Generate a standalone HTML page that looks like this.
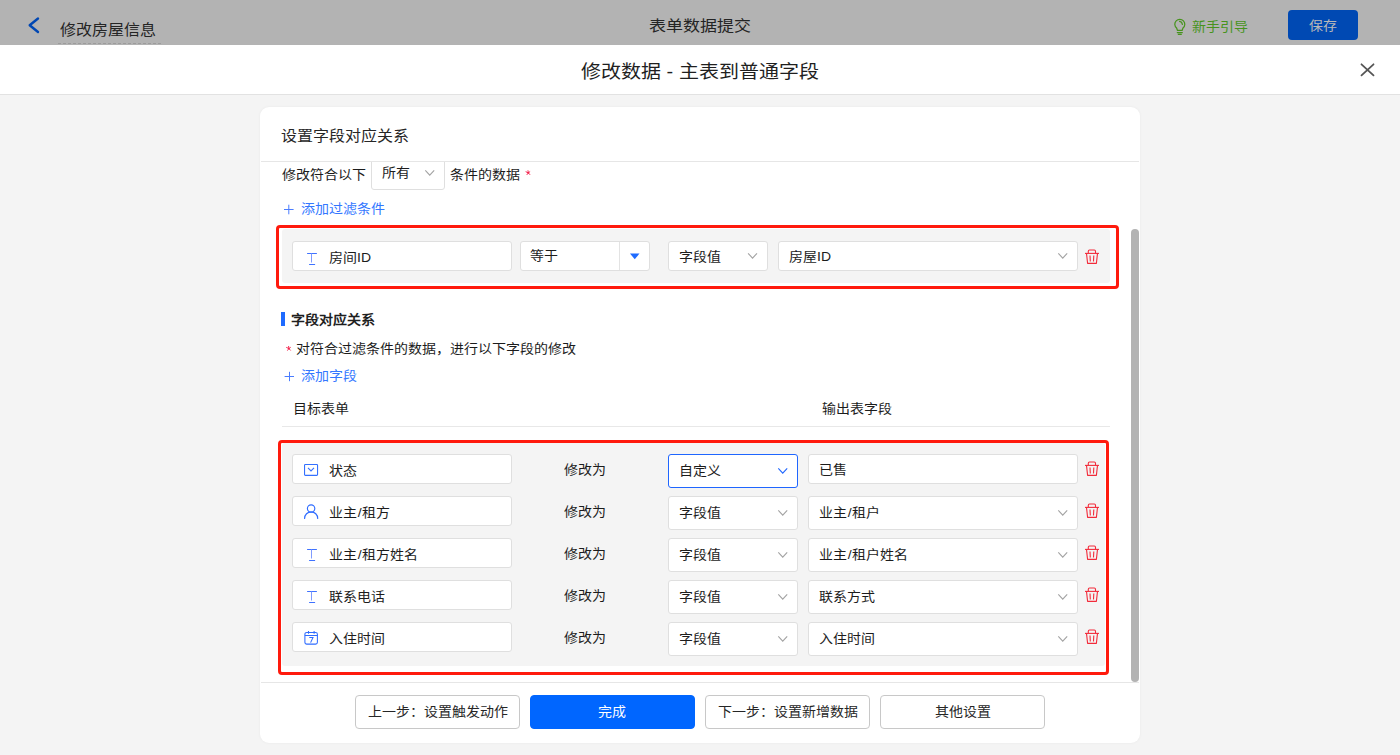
<!DOCTYPE html>
<html lang="zh-CN"><head><meta charset="utf-8">
<style>
*{box-sizing:border-box;margin:0;padding:0}
html,body{width:1400px;height:755px;overflow:hidden;background:#f4f4f4;font-family:"Liberation Sans",sans-serif;color:#333}
.a{position:absolute}
.t{position:absolute;white-space:nowrap;line-height:1;transform:scaleY(0.9);transform-origin:0 90%}
.inp{position:absolute;background:#fff;border:1px solid #dfdfdf;border-radius:3px}
.red{position:absolute;border:3px solid #ff1a0d;border-radius:4px}
.btn{position:absolute;top:695px;height:34px;width:165px;border:1px solid #c8c8c8;border-radius:4px;background:#fff}
svg{position:absolute;overflow:visible}
</style></head><body>
<div class="a" style="left:0;top:0;width:1400px;height:45px;background:#b3b3b3"></div>
<svg style="left:0;top:0" width="1" height="1"><polyline points="38,18.5 29.7,25.3 38,32" fill="none" stroke="#0047b3" stroke-width="2.4" stroke-linecap="round" stroke-linejoin="round"/></svg>
<div class="t" style="left:60px;top:21.76px;font-size:16px;color:#242424;">修改房屋信息</div>
<div class="a" style="left:58px;top:43px;width:104px;height:1px;background:repeating-linear-gradient(90deg,#9c9c9c 0 3px,transparent 3px 5px)"></div>
<div class="t" style="left:649px;top:16.97px;font-size:17px;color:#242424;">表单数据提交</div>
<svg style="left:0;top:0" width="1" height="1"><g fill="none" stroke="#47931d" stroke-width="1.25" stroke-linecap="round" stroke-linejoin="round">
<path d="M1176.6,28.1 A5,5 0 1 1 1183,28.1 L1182.1,30.4 H1177.5 Z"/>
<path d="M1177.3,32.5 H1182.3 M1178.3,34.3 H1181.3"/>
<path d="M1179.6,21.4 A3.4,3.4 0 0 1 1182.4,24.3"/></g></svg>
<div class="t" style="left:1192px;top:19.49px;font-size:14px;color:#47931d;">新手引导</div>
<div class="a" style="left:1288px;top:10px;width:70px;height:30px;background:#0049b3;border-radius:4px"></div>
<div class="t" style="left:1309px;top:18.29px;font-size:14px;color:#b8b8b8;">保存</div>
<div class="a" style="left:0;top:45px;width:1400px;height:50px;background:#fff;border-bottom:1px solid #e2e2e2"></div>
<div class="t" style="left:581px;top:60.85px;font-size:20px;color:#1f1f1f;">修改数据 - 主表到普通字段</div>
<svg style="left:0;top:0" width="1" height="1"><path d="M1361.5,64.3 L1373.5,75.3 M1373.5,64.3 L1361.5,75.3" stroke="#555" stroke-width="1.8" stroke-linecap="round"/></svg>
<div class="a" style="left:260px;top:107px;width:880px;height:636px;background:#fff;border-radius:9px;box-shadow:0 0 3px rgba(0,0,0,0.05)"></div>
<div class="t" style="left:281px;top:128.16px;font-size:16px;color:#262626;">设置字段对应关系</div>
<div class="a" style="left:261px;top:161px;width:878px;height:1px;background:#e6e6e6"></div>
<div class="a" style="left:261px;top:682px;width:878px;height:1px;background:#e6e6e6"></div>
<div class="a" style="left:0;top:0;width:1400px;height:755px;clip-path:inset(162px 0 73px 0)">
<div class="t" style="left:282px;top:167.49px;font-size:14px;color:#1c1c1c;">修改符合以下</div>
<div class="inp" style="left:371px;top:157px;width:74px;height:33px"></div>
<div class="t" style="left:382px;top:165.29px;font-size:14px;color:#1c1c1c;">所有</div>
<svg style="left:0;top:0" width="1" height="1"><polyline points="425.3,170.3 429.75,175.1 434.2,170.3" fill="none" stroke="#a3a3a3" stroke-width="1.1"/></svg>
<div class="t" style="left:450px;top:167.49px;font-size:14px;color:#1c1c1c;">条件的数据</div>
<svg style="left:0;top:0" width="1" height="1"><path d="M528.30,172.90 L528.00,170.70 M528.30,172.90 L526.00,171.80 M528.30,172.90 L529.80,171.80 M528.30,172.90 L527.00,174.60 M528.30,172.90 L529.80,174.50" stroke="#f2204a" stroke-width="0.95" stroke-linecap="round" fill="none"/></svg>
<svg style="left:0;top:0" width="1" height="1"><path d="M284,209.5 H293.6 M288.8,204.7 V214.3" stroke="#4a7dff" stroke-width="1"/></svg>
<div class="t" style="left:301px;top:201.49px;font-size:14px;color:#3377ff;">添加过滤条件</div>
<div class="red" style="left:276px;top:225px;width:843px;height:64px"></div>
<div class="a" style="left:282px;top:229px;width:828px;height:54px;background:#f4f4f4;border-radius:3px"></div>
<div class="inp" style="left:292px;top:241px;width:220px;height:30px"></div>
<svg style="left:306px;top:252px" width="12" height="14" viewBox="0 0 12 14"><g stroke="#3f72ff" stroke-width="1" fill="none"><path d="M1.1,1.5 H10.9 M3.1,12.5 H9.1"/><path d="M5.5,1.5 V10.5" stroke="#7f9bff"/></g></svg>
<div class="t" style="left:329px;top:250.49px;font-size:14px;color:#1c1c1c;">房间ID</div>
<div class="inp" style="left:520px;top:241px;width:130px;height:30px"></div>
<div class="a" style="left:619px;top:242px;width:1px;height:28px;background:#e3e3e3"></div>
<svg style="left:0;top:0" width="1" height="1"><path d="M630,253.6 H639.5 L634.75,259.2 Z" fill="#1f6bff"/></svg>
<div class="t" style="left:530px;top:248.49px;font-size:14px;color:#1c1c1c;">等于</div>
<div class="inp" style="left:668px;top:241px;width:100px;height:30px"></div>
<div class="t" style="left:679px;top:248.59px;font-size:14px;color:#1c1c1c;">字段值</div>
<svg style="left:0;top:0" width="1" height="1"><polyline points="748.0999999999999,253.3 752.55,258.1 757.0,253.3" fill="none" stroke="#a3a3a3" stroke-width="1.1"/></svg>
<div class="inp" style="left:778px;top:241px;width:300px;height:30px"></div>
<div class="t" style="left:789px;top:248.89px;font-size:14px;color:#1c1c1c;">房屋ID</div>
<svg style="left:0;top:0" width="1" height="1"><polyline points="1058.3,253.3 1062.75,258.1 1067.2,253.3" fill="none" stroke="#a3a3a3" stroke-width="1.1"/></svg>
<svg style="left:1085px;top:249px" width="14" height="15" viewBox="0 0 14 15"><g fill="none" stroke="#f22b3a" stroke-width="1.1" stroke-linejoin="round">
<path d="M3.3,4 V2.2 A1.2,1.2 0 0 1 4.5,1 H9.3 A1.2,1.2 0 0 1 10.5,2.2 V4"/><path d="M0,4.4 H14"/><path d="M1.5,4.4 L2.6,14.4 H11.4 L12.5,4.4"/><path d="M5,6.5 L5.3,12.5 M8.8,6.5 L8.5,12.5"/></g></svg>
<div class="a" style="left:281px;top:312px;width:4px;height:14px;background:#1f6bff"></div>
<div class="t" style="left:291px;top:311.74px;font-size:14px;color:#1f1f1f;font-weight:bold">字段对应关系</div>
<svg style="left:0;top:0" width="1" height="1"><path d="M288.90,348.60 L288.60,346.40 M288.90,348.60 L286.60,347.50 M288.90,348.60 L290.40,347.50 M288.90,348.60 L287.60,350.30 M288.90,348.60 L290.40,350.20" stroke="#f2204a" stroke-width="0.95" stroke-linecap="round" fill="none"/></svg>
<div class="t" style="left:296px;top:341.49px;font-size:14px;color:#1c1c1c;">对符合过滤条件的数据，进行以下字段的修改</div>
<svg style="left:0;top:0" width="1" height="1"><path d="M284.6,376.5 H294 M289.5,371.8 V381.2" stroke="#4a7dff" stroke-width="1"/></svg>
<div class="t" style="left:301px;top:368.24px;font-size:14px;color:#3377ff;">添加字段</div>
<div class="t" style="left:293px;top:401.24px;font-size:14px;color:#1c1c1c;">目标表单</div>
<div class="t" style="left:822px;top:401.49px;font-size:14px;color:#1c1c1c;">输出表字段</div>
<div class="a" style="left:282px;top:426px;width:828px;height:1px;background:#e8e8e8"></div>
<div class="red" style="left:278px;top:440px;width:831px;height:235px"></div>
<div class="a" style="left:282px;top:443px;width:823px;height:223px;background:#f4f4f4;border-radius:3px"></div>
<div class="inp" style="left:292px;top:454px;width:220px;height:30px"></div>
<svg style="left:304px;top:464px" width="14" height="12" viewBox="0 0 14 12"><g fill="none" stroke="#3370ff" stroke-width="1.1"><rect x="0.55" y="0.55" width="13" height="10.8" rx="0.8"/><polyline points="4,3.9 7,6.9 10,3.9"/></g></svg>
<div class="t" style="left:329px;top:463.49px;font-size:14px;color:#1c1c1c;">状态</div>
<div class="t" style="left:564px;top:461.99px;font-size:14px;color:#1c1c1c;">修改为</div>
<div class="inp" style="left:668px;top:454px;width:130px;height:34px;border-color:#1f66ff"></div>
<svg style="left:0;top:0" width="1" height="1"><polyline points="778.3,468.3 782.75,473.1 787.2,468.3" fill="none" stroke="#1f66ff" stroke-width="1.1"/></svg>
<div class="t" style="left:679px;top:463.49px;font-size:14px;color:#1c1c1c;">自定义</div>
<div class="inp" style="left:808px;top:454px;width:270px;height:30px"></div>
<div class="t" style="left:819px;top:461.79px;font-size:14px;color:#1c1c1c;">已售</div>
<svg style="left:1085px;top:461px" width="14" height="15" viewBox="0 0 14 15"><g fill="none" stroke="#f22b3a" stroke-width="1.1" stroke-linejoin="round">
<path d="M3.3,4 V2.2 A1.2,1.2 0 0 1 4.5,1 H9.3 A1.2,1.2 0 0 1 10.5,2.2 V4"/><path d="M0,4.4 H14"/><path d="M1.5,4.4 L2.6,14.4 H11.4 L12.5,4.4"/><path d="M5,6.5 L5.3,12.5 M8.8,6.5 L8.5,12.5"/></g></svg>
<div class="inp" style="left:292px;top:496px;width:220px;height:30px"></div>
<svg style="left:303px;top:504px" width="16" height="16" viewBox="0 0 16 16"><g fill="none" stroke="#2f6cff" stroke-width="1.15" stroke-linecap="round"><circle cx="8.1" cy="4.5" r="3.7"/><path d="M1.6,14.4 A6.55,6.55 0 0 1 14.7,14.4"/></g></svg>
<div class="t" style="left:329px;top:505.49px;font-size:14px;color:#1c1c1c;">业主<span style="padding:0 0.8px">/</span>租方</div>
<div class="t" style="left:564px;top:503.99px;font-size:14px;color:#1c1c1c;">修改为</div>
<div class="inp" style="left:668px;top:496px;width:130px;height:34px"></div>
<svg style="left:0;top:0" width="1" height="1"><polyline points="778.3,510.3 782.75,515.1 787.2,510.3" fill="none" stroke="#a3a3a3" stroke-width="1.1"/></svg>
<div class="t" style="left:679px;top:505.49px;font-size:14px;color:#1c1c1c;">字段值</div>
<div class="inp" style="left:808px;top:496px;width:270px;height:34px"></div>
<svg style="left:0;top:0" width="1" height="1"><polyline points="1058.3,510.3 1062.75,515.1 1067.2,510.3" fill="none" stroke="#a3a3a3" stroke-width="1.1"/></svg>
<div class="t" style="left:819px;top:505.49px;font-size:14px;color:#1c1c1c;">业主<span style="padding:0 0.8px">/</span>租户</div>
<svg style="left:1085px;top:503px" width="14" height="15" viewBox="0 0 14 15"><g fill="none" stroke="#f22b3a" stroke-width="1.1" stroke-linejoin="round">
<path d="M3.3,4 V2.2 A1.2,1.2 0 0 1 4.5,1 H9.3 A1.2,1.2 0 0 1 10.5,2.2 V4"/><path d="M0,4.4 H14"/><path d="M1.5,4.4 L2.6,14.4 H11.4 L12.5,4.4"/><path d="M5,6.5 L5.3,12.5 M8.8,6.5 L8.5,12.5"/></g></svg>
<div class="inp" style="left:292px;top:538px;width:220px;height:30px"></div>
<svg style="left:306px;top:548px" width="12" height="14" viewBox="0 0 12 14"><g stroke="#3f72ff" stroke-width="1" fill="none"><path d="M1.1,1.5 H10.9 M3.1,12.5 H9.1"/><path d="M5.5,1.5 V10.5" stroke="#7f9bff"/></g></svg>
<div class="t" style="left:329px;top:547.49px;font-size:14px;color:#1c1c1c;">业主<span style="padding:0 0.8px">/</span>租方姓名</div>
<div class="t" style="left:564px;top:545.99px;font-size:14px;color:#1c1c1c;">修改为</div>
<div class="inp" style="left:668px;top:538px;width:130px;height:34px"></div>
<svg style="left:0;top:0" width="1" height="1"><polyline points="778.3,552.3 782.75,557.1 787.2,552.3" fill="none" stroke="#a3a3a3" stroke-width="1.1"/></svg>
<div class="t" style="left:679px;top:547.49px;font-size:14px;color:#1c1c1c;">字段值</div>
<div class="inp" style="left:808px;top:538px;width:270px;height:34px"></div>
<svg style="left:0;top:0" width="1" height="1"><polyline points="1058.3,552.3 1062.75,557.1 1067.2,552.3" fill="none" stroke="#a3a3a3" stroke-width="1.1"/></svg>
<div class="t" style="left:819px;top:547.49px;font-size:14px;color:#1c1c1c;">业主<span style="padding:0 0.8px">/</span>租户姓名</div>
<svg style="left:1085px;top:545px" width="14" height="15" viewBox="0 0 14 15"><g fill="none" stroke="#f22b3a" stroke-width="1.1" stroke-linejoin="round">
<path d="M3.3,4 V2.2 A1.2,1.2 0 0 1 4.5,1 H9.3 A1.2,1.2 0 0 1 10.5,2.2 V4"/><path d="M0,4.4 H14"/><path d="M1.5,4.4 L2.6,14.4 H11.4 L12.5,4.4"/><path d="M5,6.5 L5.3,12.5 M8.8,6.5 L8.5,12.5"/></g></svg>
<div class="inp" style="left:292px;top:580px;width:220px;height:30px"></div>
<svg style="left:306px;top:590px" width="12" height="14" viewBox="0 0 12 14"><g stroke="#3f72ff" stroke-width="1" fill="none"><path d="M1.1,1.5 H10.9 M3.1,12.5 H9.1"/><path d="M5.5,1.5 V10.5" stroke="#7f9bff"/></g></svg>
<div class="t" style="left:329px;top:589.49px;font-size:14px;color:#1c1c1c;">联系电话</div>
<div class="t" style="left:564px;top:587.99px;font-size:14px;color:#1c1c1c;">修改为</div>
<div class="inp" style="left:668px;top:580px;width:130px;height:34px"></div>
<svg style="left:0;top:0" width="1" height="1"><polyline points="778.3,594.3 782.75,599.1 787.2,594.3" fill="none" stroke="#a3a3a3" stroke-width="1.1"/></svg>
<div class="t" style="left:679px;top:589.49px;font-size:14px;color:#1c1c1c;">字段值</div>
<div class="inp" style="left:808px;top:580px;width:270px;height:34px"></div>
<svg style="left:0;top:0" width="1" height="1"><polyline points="1058.3,594.3 1062.75,599.1 1067.2,594.3" fill="none" stroke="#a3a3a3" stroke-width="1.1"/></svg>
<div class="t" style="left:819px;top:589.49px;font-size:14px;color:#1c1c1c;">联系方式</div>
<svg style="left:1085px;top:587px" width="14" height="15" viewBox="0 0 14 15"><g fill="none" stroke="#f22b3a" stroke-width="1.1" stroke-linejoin="round">
<path d="M3.3,4 V2.2 A1.2,1.2 0 0 1 4.5,1 H9.3 A1.2,1.2 0 0 1 10.5,2.2 V4"/><path d="M0,4.4 H14"/><path d="M1.5,4.4 L2.6,14.4 H11.4 L12.5,4.4"/><path d="M5,6.5 L5.3,12.5 M8.8,6.5 L8.5,12.5"/></g></svg>
<div class="inp" style="left:292px;top:622px;width:220px;height:30px"></div>
<svg style="left:304px;top:630px" width="14" height="15" viewBox="0 0 14 15"><g fill="none" stroke="#2f6cff" stroke-width="1.05"><rect x="0.9" y="2.4" width="12.5" height="11.7" rx="1.8"/><path d="M0.9,5.5 H13.4 M4.5,1 V3.8 M10.1,1 V3.8 M5.3,7.5 H9 L6.6,12.6"/></g></svg>
<div class="t" style="left:329px;top:631.49px;font-size:14px;color:#1c1c1c;">入住时间</div>
<div class="t" style="left:564px;top:629.99px;font-size:14px;color:#1c1c1c;">修改为</div>
<div class="inp" style="left:668px;top:622px;width:130px;height:34px"></div>
<svg style="left:0;top:0" width="1" height="1"><polyline points="778.3,636.3 782.75,641.1 787.2,636.3" fill="none" stroke="#a3a3a3" stroke-width="1.1"/></svg>
<div class="t" style="left:679px;top:631.49px;font-size:14px;color:#1c1c1c;">字段值</div>
<div class="inp" style="left:808px;top:622px;width:270px;height:34px"></div>
<svg style="left:0;top:0" width="1" height="1"><polyline points="1058.3,636.3 1062.75,641.1 1067.2,636.3" fill="none" stroke="#a3a3a3" stroke-width="1.1"/></svg>
<div class="t" style="left:819px;top:631.49px;font-size:14px;color:#1c1c1c;">入住时间</div>
<svg style="left:1085px;top:629px" width="14" height="15" viewBox="0 0 14 15"><g fill="none" stroke="#f22b3a" stroke-width="1.1" stroke-linejoin="round">
<path d="M3.3,4 V2.2 A1.2,1.2 0 0 1 4.5,1 H9.3 A1.2,1.2 0 0 1 10.5,2.2 V4"/><path d="M0,4.4 H14"/><path d="M1.5,4.4 L2.6,14.4 H11.4 L12.5,4.4"/><path d="M5,6.5 L5.3,12.5 M8.8,6.5 L8.5,12.5"/></g></svg>
</div>
<div class="a" style="left:1131px;top:229px;width:8px;height:453px;background:#b3b3b3;border-radius:4px"></div>
<div class="btn" style="left:355px"></div>
<div class="t" style="left:368px;top:704.49px;font-size:14px;color:#262626;">上一步：设置触发动作</div>
<div class="btn" style="left:530px;background:#0066ff;border-color:#0066ff"></div>
<div class="t" style="left:598px;top:704.49px;font-size:14px;color:#fff;">完成</div>
<div class="btn" style="left:705px"></div>
<div class="t" style="left:718px;top:704.49px;font-size:14px;color:#262626;">下一步：设置新增数据</div>
<div class="btn" style="left:880px"></div>
<div class="t" style="left:934.6px;top:704.49px;font-size:14px;color:#262626;">其他设置</div>
</body></html>
